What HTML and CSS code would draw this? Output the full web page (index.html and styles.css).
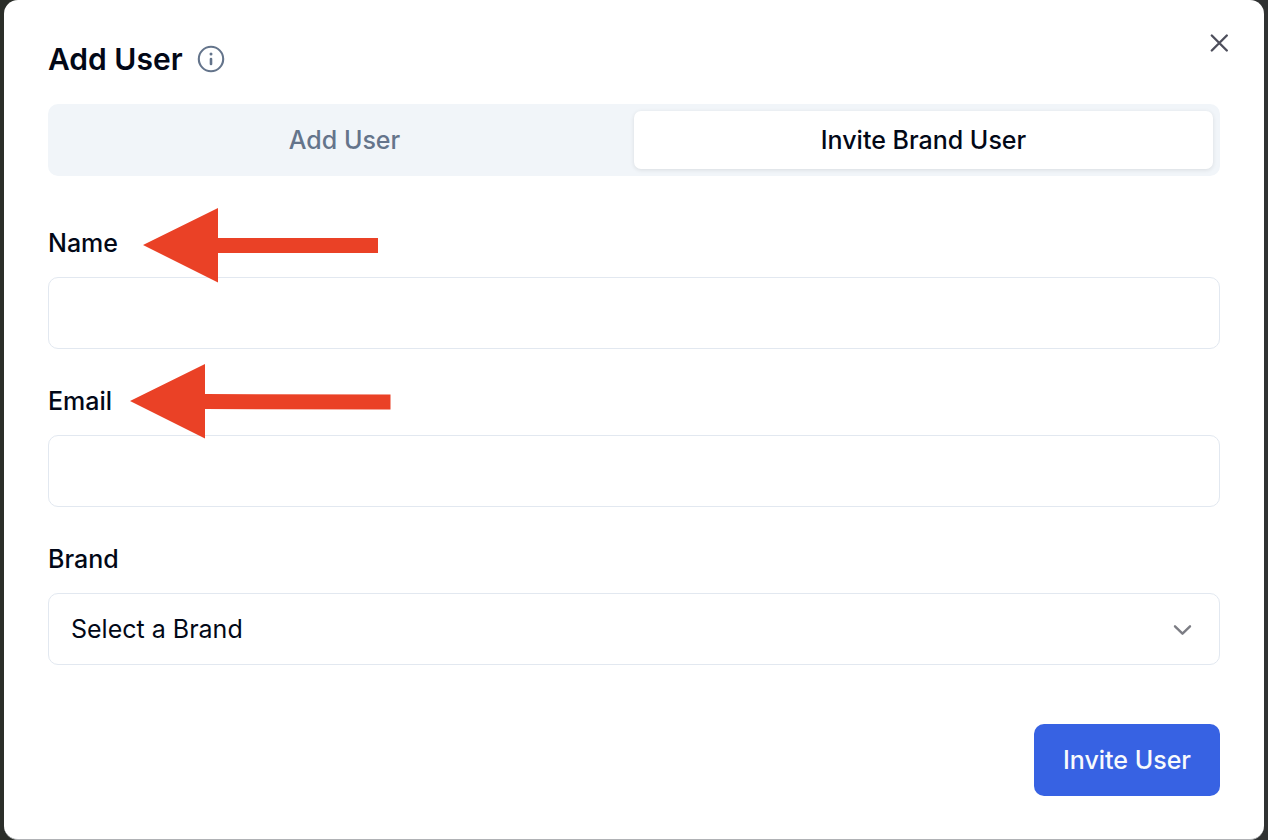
FILE: index.html
```html
<!DOCTYPE html>
<html lang="en">
<head>
<meta charset="utf-8">
<title>Add User</title>
<meta name="viewport" content="width=device-width, initial-scale=1">
<link rel="stylesheet" href="styles.css">
</head>
<body>
<main class="dialog" role="dialog" aria-labelledby="dialog-title">
  <button class="close" type="button" aria-label="Close">
    <svg width="20" height="20" viewBox="0 0 20 20" aria-hidden="true"><path d="M2.800 2.500 17.800 17.500M17.800 2.500 2.800 17.500"/></svg>
  </button>
  <header class="header">
    <h1 class="title" id="dialog-title">Add User</h1>
    <svg class="info" width="28" height="28" viewBox="0 0 28 28" aria-hidden="true">
      <circle cx="14" cy="14" r="12.2" fill="none" stroke="currentColor" stroke-width="2.1"/>
      <path d="M14 14v5" stroke="currentColor" stroke-width="2.6" stroke-linecap="round"/>
      <circle cx="14" cy="9.1" r="1.5" fill="currentColor"/>
    </svg>
  </header>
  <div class="tabs" role="tablist">
    <button class="tab" type="button" role="tab" aria-selected="false">Add User</button>
    <button class="tab tab-active" type="button" role="tab" aria-selected="true">Invite Brand User</button>
  </div>
  <form class="form">
    <div class="field">
      <label class="label" for="name">Name</label>
      <input class="control" id="name" type="text">
      <svg class="arrow arrow-name" width="236" height="76" viewBox="0 0 236 76" aria-hidden="true"><path d="M0 38 75 1V31H235V46H75V75.500Z"/></svg>
    </div>
    <div class="field">
      <label class="label" for="email">Email</label>
      <input class="control" id="email" type="email">
      <svg class="arrow arrow-email" width="262" height="76" viewBox="0 0 262 76" aria-hidden="true"><path d="M0 38 75 1V31L260.500 31.500V46.500L75 46V75.500Z"/></svg>
    </div>
    <div class="field">
      <label class="label" for="brand">Brand</label>
      <div class="select-wrap">
        <select class="control select" id="brand"><option>Select a Brand</option></select>
        <svg class="chevron" width="20" height="12" viewBox="0 0 20 12" aria-hidden="true"><path d="m3 2.300 7.500 7.400L18 2.300"/></svg>
      </div>
    </div>
    <button class="submit" type="button">Invite User</button>
  </form>
</main>
</body>
</html>
```
FILE: styles.css
```css
* {
  box-sizing: border-box;
}

body {
  margin: 0;
  padding: 0 4px;
  background: linear-gradient(90deg, #2b2e29, #303232);
  color: #020817;
  font-family: Inter, "Liberation Sans", sans-serif;
  font-size: 25px;
  line-height: 34px;
}

button,
input,
select {
  font: inherit;
  color: inherit;
}

.dialog {
  position: relative;
  padding: 40px 44px 43px;
  background: #fff;
  border-bottom: 1px solid #b0b2b5;
  border-radius: 14px;
}

.close {
  position: absolute;
  top: 25px;
  right: 27px;
  display: flex;
  padding: 8px;
  border: 0;
  background: none;
  color: #4e4f5c;
}

.close svg,
.chevron {
  fill: none;
  stroke: currentColor;
  stroke-width: 2.4;
  stroke-linecap: round;
  stroke-linejoin: round;
}

.header {
  display: flex;
  align-items: center;
  gap: 14px;
  height: 38px;
}

.title {
  margin: 0;
  font-size: 30px;
  font-weight: 600;
}

.info {
  color: #64748b;
}

.tabs {
  display: grid;
  grid-template-columns: 1fr 1fr;
  margin-top: 26px;
  padding: 7px;
  border-radius: 10px;
  background: #f1f5f9;
}

.tab {
  padding: 12px;
  border: 0;
  border-radius: 7px;
  background: none;
  color: #64748b;
  font-weight: 500;
}

.tab-active {
  background: #fff;
  color: #020817;
  box-shadow: 0 1px 4px rgb(0 0 0 / 10%);
}

.form {
  display: flex;
  flex-direction: column;
  gap: 35px;
  margin-top: 50px;
}

.field {
  position: relative;
  display: flex;
  flex-direction: column;
  gap: 17px;
}

.label {
  align-self: flex-start;
  font-weight: 500;
}

.control {
  display: block;
  width: 100%;
  height: 72px;
  padding: 0 22px;
  border: 1px solid #e2e8f0;
  border-radius: 10px;
  background: #fff;
}

.select-wrap {
  position: relative;
}

.select {
  appearance: none;
}

.chevron {
  position: absolute;
  top: 31px;
  right: 28px;
  color: #7c7d84;
  pointer-events: none;
}

.arrow {
  position: absolute;
  fill: #ea4126;
  pointer-events: none;
}

.arrow-name {
  top: -19px;
  left: 95px;
}

.arrow-email {
  top: -21px;
  left: 82px;
}

.submit {
  align-self: flex-end;
  margin-top: 24px;
  padding: 19px 29px;
  border: 0;
  border-radius: 10px;
  background: #3762e3;
  color: #f8fafc;
  font-weight: 500;
}
```
